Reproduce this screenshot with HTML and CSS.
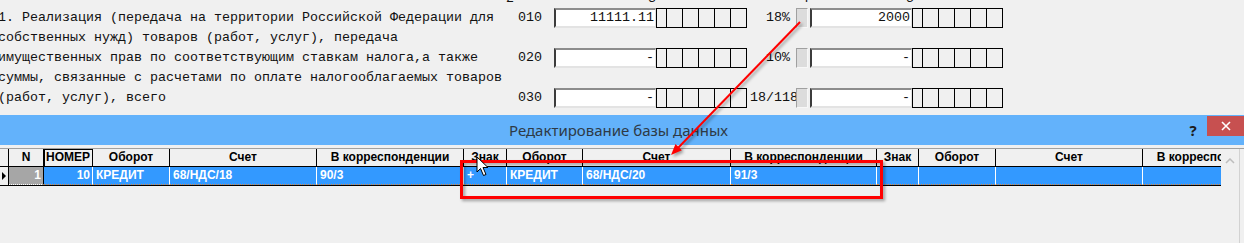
FILE: index.html
```html
<!DOCTYPE html>
<html lang="ru">
<head>
  <meta charset="UTF-8" />
  <title>Редактирование базы данных</title>
  <link rel="stylesheet" href="styles.css">
</head>
<body>

<!-- декларация, раздел 3 -->
<div class="form">
  <div class="colnums"><span class="n2">2</span><span class="n3">3</span><span class="n4">4</span><span class="n5">5</span></div>
  <div class="section">
    <div class="caption">1. Реализация (передача на территории Российской Федерации для
собственных нужд) товаров (работ, услуг), передача
имущественных прав по соответствующим ставкам налога,а также
суммы, связанные с расчетами по оплате налогооблагаемых товаров
(работ, услуг), всего</div>
    <div class="rows">
      <div class="row">
        <span class="code">010</span>
        <span class="field">11111.11</span>
        <span class="cells"><i></i><i></i><i></i><i></i><i></i><i></i></span>
        <span class="rate">18%</span>
        <span class="flag"></span>
        <span class="field">2000</span>
        <span class="cells"><i></i><i></i><i></i><i></i><i></i><i></i></span>
      </div>
      <div class="row">
        <span class="code">020</span>
        <span class="field">-</span>
        <span class="cells"><i></i><i></i><i></i><i></i><i></i><i></i></span>
        <span class="rate">10%</span>
        <span class="flag"></span>
        <span class="field">-</span>
        <span class="cells"><i></i><i></i><i></i><i></i><i></i><i></i></span>
      </div>
      <div class="row">
        <span class="code">030</span>
        <span class="field">-</span>
        <span class="cells"><i></i><i></i><i></i><i></i><i></i><i></i></span>
        <span class="rate">18/118</span>
        <span class="flag"></span>
        <span class="field">-</span>
        <span class="cells"><i></i><i></i><i></i><i></i><i></i><i></i></span>
      </div>
    </div>
  </div>
</div>

<!-- окно редактирования -->
<div class="dialog">
  <div class="titlebar">
    <span class="title">Редактирование базы данных</span>
    <span class="help">?</span>
    <span class="close">
      <svg width="10" height="10" viewBox="0 0 10 10"><path d="M1 1L9 9M9 1L1 9" stroke="#fff" stroke-width="1.6"/></svg>
    </span>
  </div>
  <div class="grid">
    <div class="table">
      <div class="hrow">
        <span class="hcell"></span>
        <span class="hcell">N</span>
        <span class="hcell focus">НОМЕР</span>
        <span class="hcell">Оборот</span>
        <span class="hcell">Счет</span>
        <span class="hcell">В корреспонденции</span>
        <span class="hcell">Знак</span>
        <span class="hcell">Оборот</span>
        <span class="hcell">Счет</span>
        <span class="hcell">В корреспонденции</span>
        <span class="hcell">Знак</span>
        <span class="hcell">Оборот</span>
        <span class="hcell">Счет</span>
        <span class="hcell">В корреспонденции</span>
      </div>
      <div class="drow">
        <span class="dcell ind"><b class="tri"></b></span>
        <span class="dcell nr num">1</span>
        <span class="dcell num">10</span>
        <span class="dcell">КРЕДИТ</span>
        <span class="dcell">68/НДС/18</span>
        <span class="dcell">90/3</span>
        <span class="dcell">+</span>
        <span class="dcell">КРЕДИТ</span>
        <span class="dcell">68/НДС/20</span>
        <span class="dcell">91/3</span>
        <span class="dcell"></span>
        <span class="dcell"></span>
        <span class="dcell"></span>
        <span class="dcell"></span>
      </div>
    </div>
    <div class="sbar">
      <svg width="10" height="6" viewBox="0 0 10 6"><path d="M1 5L5 1L9 5" fill="none" stroke="#bdbdbd" stroke-width="1.5"/></svg>
    </div>
  </div>
</div>

<!-- пометки поверх скриншота -->
<svg class="marks" width="1244" height="243" viewBox="0 0 1244 243">
  <g class="shadowed">
    <rect x="461.5" y="161.5" width="420" height="36" fill="none" stroke="#ff0000" stroke-width="3"/>
    <line x1="800" y1="22" x2="677" y2="149" stroke="#ff0000" stroke-width="2"/>
    <polygon points="671,155 681.9,150.2 675.5,144" fill="#ff0000"/>
  </g>
  <path d="M477 157L477 172L480.5 168.5L483.5 175.5L486 174.5L483 167.5L488 167.5Z" fill="#fff" stroke="#000" stroke-width="1" stroke-linejoin="round"/>
</svg>

</body>
</html>
```

FILE: styles.css
```css
/* общий фон формы */
body {
  margin: 0;
  width: 1244px;
  height: 243px;
  overflow: hidden;
  position: relative;
  background: #f0f0f0;
  font-family: "Liberation Mono", "Courier New", monospace;
}

/* верхняя часть: текст декларации и поля */
.form {
  height: 115px;
  overflow: hidden;
  font-size: 13.333px;
  color: #111;
}

.colnums {
  height: 8px;
  overflow: hidden;
  display: flex;
  line-height: 20px;
}

.colnums span {
  margin-top: -11px;
}

.n2 { margin-left: 506px; }
.n3 { margin-left: 134px; }
.n4 { margin-left: 145px; }
.n5 { margin-left: 97px; }

.section {
  display: flex;
}

.caption {
  width: 520px;
  margin-left: -2px;
  white-space: pre;
  line-height: 20px;
}

.rows {
  display: flex;
  flex-direction: column;
  gap: 20px;
}

.row {
  display: flex;
  height: 20px;
}

.code {
  width: 24px;
  margin-right: 12px;
  line-height: 20px;
}

.field {
  width: 102px;
  box-sizing: border-box;
  background: #fff;
  border-top: 2px solid #8c8c8c;
  border-left: 2px solid #3c3c3c;
  border-right: 1px solid #e3e3e3;
  border-bottom: 2px solid #e3e3e3;
  padding-right: 1px;
  text-align: right;
  line-height: 16px;
}

.cells {
  display: flex;
  border: 1px solid #000;
  border-right: 0;
}

.cells i {
  width: 16px;
  box-sizing: border-box;
  border-right: 1px solid #000;
}

.cells i:first-child {
  width: 10px;
}

.rate {
  width: 46px;
  margin-left: 3px;
  padding-right: 6px;
  box-sizing: border-box;
  text-align: right;
  white-space: nowrap;
  overflow: hidden;
  line-height: 20px;
}

.flag {
  width: 12px;
  margin-right: 2px;
  box-sizing: border-box;
  background: #dcdcdc;
  border: 1px solid;
  border-color: #a0a0a0 #f7f7f7 #f7f7f7 #a0a0a0;
}

/* окно */
.dialog {
  height: 128px;
}

.titlebar {
  height: 30px;
  display: flex;
  align-items: center;
  background: #63b2fb;
}

.title {
  flex: 1;
  padding-left: 54px;
  text-align: center;
  font: 15px "Noto Sans", "Open Sans", sans-serif;
  color: #2e3a46;
}

.help {
  width: 20px;
  text-align: center;
  font: bold 15px "Noto Sans", sans-serif;
  color: #1c1c1c;
}

.close {
  align-self: flex-start;
  margin-top: 1px;
  margin-left: 4px;
  width: 37px;
  height: 20px;
  display: flex;
  align-items: center;
  justify-content: center;
  background: #c75050;
}

/* таблица */
.grid {
  display: flex;
  margin-top: 3px;
  border-top: 1px solid #a0a0a0;
  height: 94px;
}

.table {
  width: 1221px;
  overflow: hidden;
}

.hrow,
.drow {
  display: grid;
  grid-template-columns: 9px 35px 49px 77px 147px 147px 43px 76px 148px 146px 42px 77px 147px 147px;
  height: 18px;
  font: bold 12px "Liberation Sans", Arial, sans-serif;
}

.hrow {
  border-bottom: 1px solid #000;
  box-sizing: border-box;
}

.hcell {
  border-right: 1px solid #000;
  text-align: center;
  line-height: 17px;
  white-space: nowrap;
  color: #000;
}

.hcell.focus {
  box-shadow: inset 1px 1px 0 #000;
}

.drow {
  border-bottom: 1px solid #000;
}

.dcell {
  background: #3399ff;
  color: #fff;
  border-right: 1px solid #fff;
  border-bottom: 1px dotted #e0873a;
  padding: 0 3px;
  line-height: 17px;
  white-space: nowrap;
  overflow: hidden;
}

.dcell.num {
  text-align: right;
  padding-right: 2px;
}

.dcell.ind {
  background: #f0f0f0;
  border-right: 1px solid #000;
  border-bottom: 0;
  padding: 0;
  display: flex;
  align-items: center;
}

.tri {
  margin-left: 2px;
  border-left: 4px solid #000;
  border-top: 4px solid transparent;
  border-bottom: 4px solid transparent;
}

.dcell.nr {
  background: #a6a6a6;
  border-right: 1px solid #000;
  border-bottom: 1px dotted #fff;
}

.sbar {
  width: 18px;
  border-right: 1px solid #d2d2d2;
  display: flex;
  justify-content: center;
  padding-top: 9px;
  align-items: flex-start;
}

/* красные пометки */
.marks {
  position: absolute;
  top: 0;
  left: 0;
  pointer-events: none;
}

.shadowed {
  filter: drop-shadow(2px 2px 1.5px rgba(0, 0, 0, 0.35));
}
```
